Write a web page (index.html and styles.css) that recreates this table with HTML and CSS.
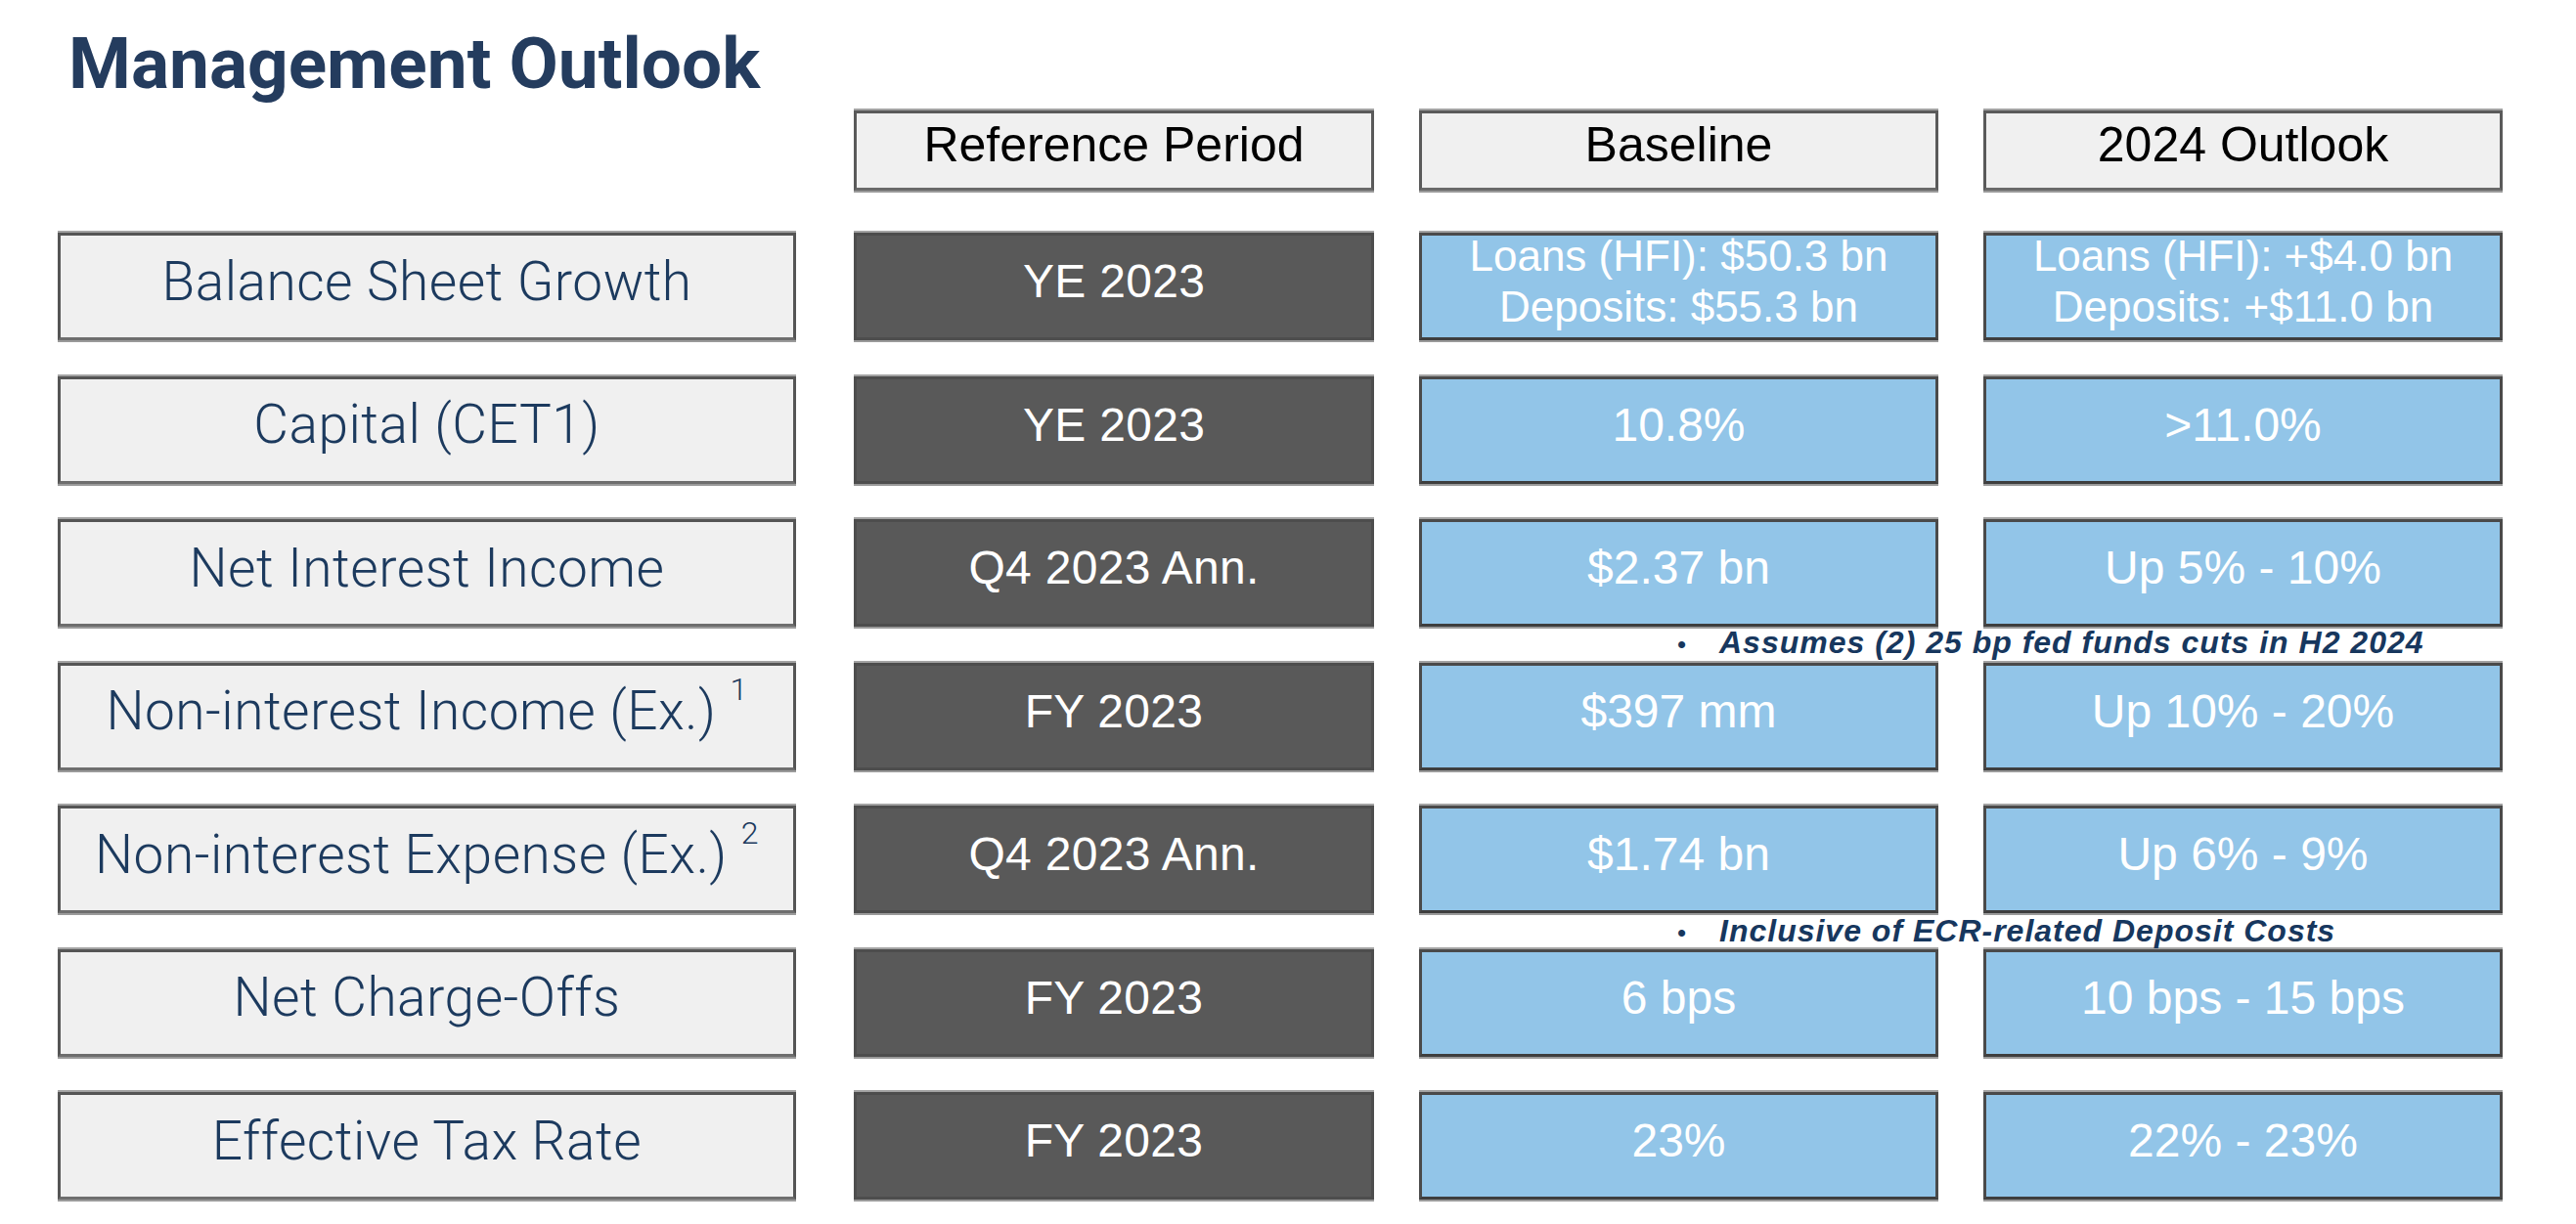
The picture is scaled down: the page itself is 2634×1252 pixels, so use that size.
FILE: index.html
```html
<!DOCTYPE html>
<html lang="en">
<head>
<meta charset="utf-8">
<title>Management Outlook</title>
<link rel="stylesheet" href="styles.css">
</head>
<body>
<main class="page">
  <h1 class="title">Management Outlook</h1>

  <div class="grid head-grid">
    <div class="spacer"></div>
    <div class="cell head">Reference Period</div>
    <div class="cell head">Baseline</div>
    <div class="cell head">2024 Outlook</div>
  </div>

  <div class="grid body-grid">
    <div class="cell label">Balance Sheet Growth</div>
    <div class="cell dark">YE 2023</div>
    <div class="cell blue two"><span class="lines"><span class="line">Loans (HFI): $50.3 bn</span><span class="line">Deposits: $55.3 bn</span></span></div>
    <div class="cell blue two"><span class="lines"><span class="line">Loans (HFI): +$4.0 bn</span><span class="line">Deposits: +$11.0 bn</span></span></div>

    <div class="cell label">Capital (CET1)</div>
    <div class="cell dark">YE 2023</div>
    <div class="cell blue">10.8%</div>
    <div class="cell blue">&gt;11.0%</div>

    <div class="cell label">Net Interest Income</div>
    <div class="cell dark">Q4 2023 Ann.</div>
    <div class="cell blue has-note">$2.37 bn
      <p class="note"><span class="bullet">•</span>Assumes (2) 25 bp fed funds cuts in H2 2024</p>
    </div>
    <div class="cell blue">Up 5% - 10%</div>

    <div class="cell label"><span>Non-interest Income (Ex.)<sup>1</sup></span></div>
    <div class="cell dark">FY 2023</div>
    <div class="cell blue">$397 mm</div>
    <div class="cell blue">Up 10% - 20%</div>

    <div class="cell label"><span>Non-interest Expense (Ex.)<sup>2</sup></span></div>
    <div class="cell dark">Q4 2023 Ann.</div>
    <div class="cell blue has-note">$1.74 bn
      <p class="note note-b"><span class="bullet">•</span>Inclusive of ECR-related Deposit Costs</p>
    </div>
    <div class="cell blue">Up 6% - 9%</div>

    <div class="cell label">Net Charge-Offs</div>
    <div class="cell dark">FY 2023</div>
    <div class="cell blue">6 bps</div>
    <div class="cell blue">10 bps - 15 bps</div>

    <div class="cell label">Effective Tax Rate</div>
    <div class="cell dark">FY 2023</div>
    <div class="cell blue">23%</div>
    <div class="cell blue">22% - 23%</div>
  </div>
</main>
</body>
</html>
```

FILE: styles.css
```css
html, body {
  margin: 0;
  padding: 0;
  background: #ffffff;
}

.page {
  width: 2634px;
  height: 1252px;
  box-sizing: border-box;
  padding-top: 29px;
  overflow: hidden;
}

.title {
  margin: 0 0 11px 0;
  padding-left: 70px;
  font-family: Roboto, "Liberation Sans", sans-serif;
  font-weight: 700;
  font-size: 73px;
  line-height: 73px;
  color: #243c5e;
}

.grid {
  display: grid;
  margin-left: 59px;
  grid-template-columns: 768px 532px 531px 531px;
  column-gap: 46px;
}

.head-grid {
  grid-template-rows: 82px;
  margin-bottom: 43px;
}

.body-grid {
  grid-template-rows: repeat(7, 110px);
  row-gap: 36.5px;
}

.cell {
  box-sizing: border-box;
  display: flex;
  align-items: center;
  justify-content: center;
  text-align: center;
  border: 3px solid #4a4a4a;
  border-bottom-color: #3e3e3e;
  box-shadow: 0 -2px 0 #a3a3a3, 0 2px 0 #9a9a9a;
  font-family: "Liberation Sans", Arial, sans-serif;
  font-size: 48px;
  line-height: 1;
  padding-bottom: 10px;
}

.head {
  background: #f0f0f0;
  color: #000000;
  font-size: 50px;
  padding-bottom: 12px;
  border-color: #5a5a5a;
  border-bottom-color: #6a6a6a;
}

.label {
  width: 755px;
  background: #f0f0f0;
  color: #1c3a5e;
  font-family: Roboto, "Liberation Sans", sans-serif;
  font-weight: 300;
  font-size: 55px;
  letter-spacing: 0.5px;
  padding-bottom: 10px;
  border-color: #555555;
  border-bottom-color: #6e6e6e;
}

.label sup {
  font-size: 32px;
  line-height: 0;
  vertical-align: 30px;
  margin-left: 14px;
}

.dark {
  background: #595959;
  color: #ffffff;
  border-color: #4d4d4d;
  letter-spacing: 0.3px;
}

.blue {
  background: #92c5e8;
  color: #ffffff;
}

.two {
  font-size: 44px;
  line-height: 52px;
}

.lines {
  display: flex;
  flex-direction: column;
  align-items: center;
}

.line {
  display: block;
  white-space: nowrap;
}

.has-note {
  position: relative;
}

.note {
  position: absolute;
  top: 100%;
  left: 261px;
  margin: 3px 0 0 0;
  padding: 0;
  white-space: nowrap;
  font-family: "Liberation Sans", Arial, sans-serif;
  font-size: 32px;
  line-height: 32px;
  font-weight: 700;
  font-style: italic;
  letter-spacing: 1px;
  color: #17375e;
  z-index: 2;
}

.note-b {
  margin-top: 5px;
}

.bullet {
  display: inline-block;
  width: 43px;
  text-align: left;
  font-style: normal;
  font-weight: 400;
  font-size: 26px;
}
```
